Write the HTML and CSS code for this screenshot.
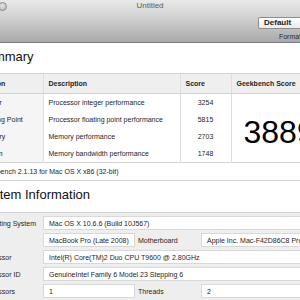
FILE: index.html
```html
<!DOCTYPE html>
<html lang="en">
<head>
    <meta charset="UTF-8">
    <title>Untitled</title>
    <link rel="stylesheet" href="styles.css">
</head>
<body>
    <!-- Window toolbar -->
    <div class="toolbar">
        <div class="titlebar">
            <span class="light"></span>
            <div class="title">Untitled</div>
            <span></span>
        </div>
        <div class="controls">
            <div class="popup">Default</div>
            <div class="control-label">Format</div>
        </div>
    </div>

    <!-- Report, scrolled a little to the right -->
    <div class="report">
        <h2>Summary</h2>
        <table class="summary">
            <colgroup>
                <col class="c-section">
                <col class="c-desc">
                <col class="c-score">
                <col>
            </colgroup>
            <tr>
                <th>Section</th>
                <th>Description</th>
                <th>Score</th>
                <th>Geekbench Score</th>
            </tr>
            <tr>
                <td class="name">Integer</td>
                <td>Processor integer performance</td>
                <td class="score">3254</td>
                <td class="total" rowspan="4">3889</td>
            </tr>
            <tr>
                <td class="name">Floating Point</td>
                <td>Processor floating point performance</td>
                <td class="score">5815</td>
            </tr>
            <tr>
                <td class="name">Memory</td>
                <td>Memory performance</td>
                <td class="score">2703</td>
            </tr>
            <tr>
                <td class="name">Stream</td>
                <td>Memory bandwidth performance</td>
                <td class="score">1748</td>
            </tr>
            <tr>
                <td class="footnote" colspan="4">Geekbench 2.1.13 for Mac OS X x86 (32-bit)</td>
            </tr>
        </table>

        <h2 class="second">System Information</h2>
        <table class="system">
            <colgroup>
                <col class="c-label">
                <col class="c-value">
                <col class="c-label2">
                <col>
            </colgroup>
            <tr>
                <td class="label">Operating System</td>
                <td class="value" colspan="3">Mac OS X 10.6.6 (Build 10J567)</td>
            </tr>
            <tr>
                <td class="label">Model</td>
                <td class="value">MacBook Pro (Late 2008)</td>
                <td class="label label2">Motherboard</td>
                <td class="value">Apple Inc. Mac-F42D86C8 Proto</td>
            </tr>
            <tr>
                <td class="label">Processor</td>
                <td class="value" colspan="3">Intel(R) Core(TM)2 Duo CPU T9600 @ 2.80GHz</td>
            </tr>
            <tr>
                <td class="label">Processor ID</td>
                <td class="value" colspan="3">GenuineIntel Family 6 Model 23 Stepping 6</td>
            </tr>
            <tr>
                <td class="label">Processors</td>
                <td class="value">1</td>
                <td class="label label2">Threads</td>
                <td class="value">2</td>
            </tr>
        </table>
    </div>
</body>
</html>
```

FILE: styles.css
```css
/* General page */
body {
    margin: 0;
    width: 300px;
    height: 300px;
    overflow: hidden;
    background: #ffffff;
    font-family: 'Liberation Sans', Arial, sans-serif;
    color: #1e1e1e;
}

/* Toolbar */
.toolbar {
    height: 42px;
    background: linear-gradient(#e9e9e9, #cfcfcf 45%, #a9a9a9);
    border-bottom: 1px solid #7e7e7e;
    display: flex;
    flex-direction: column;
}

.titlebar {
    display: grid;
    grid-template-columns: 1fr auto 1fr;
    align-items: start;
}

.light {
    width: 7px;
    height: 7px;
    margin: 2px 0 0 -2px;
    border-radius: 50%;
    background: radial-gradient(circle at 50% 35%, #e4e4e4, #b4b4b4);
    border: 1px solid #8c8c8c;
}

.title {
    font-size: 8px;
    line-height: 10px;
    padding-top: 1px;
    color: #5c5c5c;
}

.controls {
    margin: 6px 0 0 258px;
    width: 64px;
    text-align: center;
}

.popup {
    height: 10px;
    line-height: 10px;
    padding-left: 5px;
    text-align: left;
    font-size: 8px;
    font-weight: bold;
    color: #222;
    background: linear-gradient(#ffffff, #ececec);
    border: 1px solid #8e8e8e;
    border-radius: 2px;
}

.control-label {
    margin-top: 4px;
    font-size: 7px;
    line-height: 8px;
    color: #2a2a2a;
}

/* Report */
.report {
    margin-left: -25px;
    width: 390px;
}

h2 {
    margin: 6px 0 9px 3px;
    font-size: 13px;
    line-height: 15px;
    font-weight: normal;
    color: #111;
}

h2.second {
    margin: 6px 0 10px 3px;
}

table {
    width: 100%;
    table-layout: fixed;
    font-size: 7px;
}

.c-section,
.c-label {
    width: 68px;
}

.c-desc {
    width: 137px;
}

.c-score {
    width: 51px;
}

.c-value {
    width: 92px;
}

.c-label2 {
    width: 66px;
}

/* Summary table */
.summary {
    border-collapse: collapse;
}

.summary th {
    height: 19px;
    padding: 0 5px;
    text-align: left;
    font-weight: bold;
    background: #efefef;
    border-top: 1px solid #d2d2d2;
    border-bottom: 1px solid #d2d2d2;
    border-left: 1px solid #dedede;
}

.summary th:first-child {
    border-left: none;
}

.summary td {
    height: 17px;
    padding: 0 5px;
    border-left: 1px solid #dedede;
    white-space: nowrap;
    overflow: hidden;
}

.summary td.name {
    border-left: none;
    background: #f5f5f5;
}

.summary td.score {
    text-align: center;
}

.summary td.total {
    padding: 9px 0 0 12px;
    font-size: 32px;
    vertical-align: middle;
    color: #000;
}

.summary td.footnote {
    border-left: none;
    border-top: 1px solid #d2d2d2;
    border-bottom: 1px solid #d2d2d2;
}

/* System information table */
.system {
    border-collapse: separate;
    border-spacing: 0 3px;
    border-top: 1px solid #d2d2d2;
    background: #eeeeee;
}

.system td {
    height: 12px;
    padding: 0 5px;
    white-space: nowrap;
    overflow: hidden;
}

.system td.value {
    background: #ffffff;
    border: 1px solid #d8d8d8;
}

.system td.label2 {
    padding-left: 3px;
}
```
